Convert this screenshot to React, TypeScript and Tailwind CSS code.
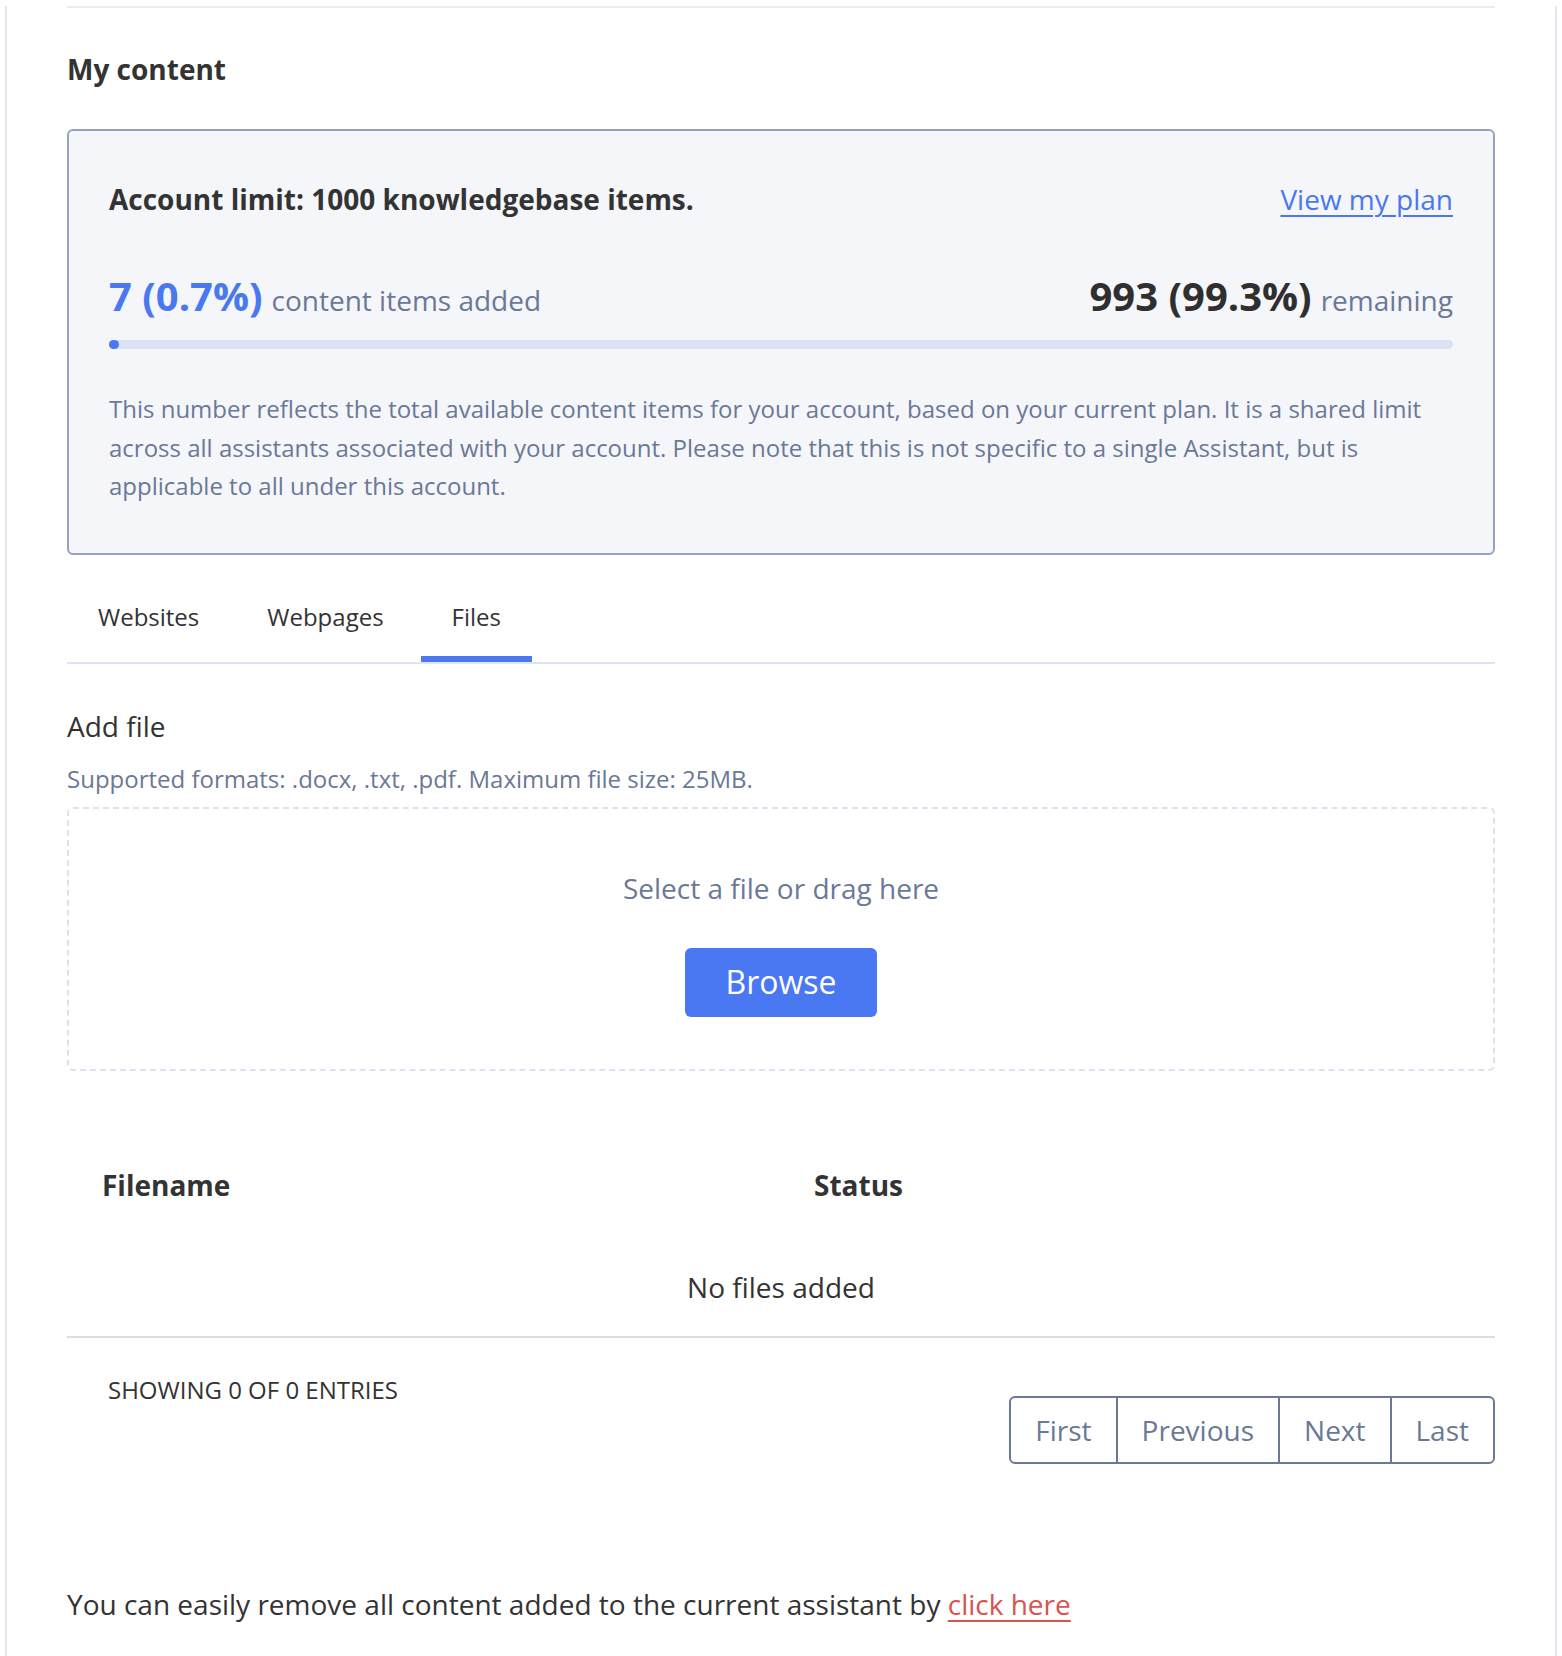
import React from 'react';

const font = { fontFamily: '"Open Sans", "Noto Sans", sans-serif' };

const tabs = ['Websites', 'Webpages', 'Files'];
const pages = ['First', 'Previous', 'Next', 'Last'];

export default function App() {
  const used = 7;
  const limit = 1000;
  const pct = (used / limit) * 100;

  return (
    <div className="min-h-screen bg-white text-[#333333]" style={font}>
      <div className="ml-[5px] w-[1552px] border-x-2 border-[#e3e7f1] px-[60px] pb-[50px]">
        <div className="mt-[6px] border-t-2 border-[#ececec]">
          <h1 className="mt-[40px] text-[28px] font-bold leading-[42px]">My content</h1>

          {/* account limit card */}
          <div className="mt-[39px] rounded-md border-2 border-[#96a2c3] bg-[#f4f6fa] px-[40px] pt-[47px] pb-[47px]">
            <div className="flex items-baseline justify-between leading-[42px]">
              <span className="text-[28px] font-bold">Account limit: 1000 knowledgebase items.</span>
              <a href="#" className="text-[28px] text-[#4a78f0] underline underline-offset-[5px] decoration-[2px]">
                View my plan
              </a>
            </div>
            <div className="mt-[46px] flex items-baseline justify-between leading-[60px]">
              <div>
                <span className="text-[40px] font-bold text-[#4a78f0]">7 (0.7%)</span>
                <span className="ml-[9px] text-[28px] text-[#6b7896]">content items added</span>
              </div>
              <div>
                <span className="text-[40px] font-bold text-[#2f2f2f]">993 (99.3%)</span>
                <span className="ml-[9px] text-[28px] text-[#6b7896]">remaining</span>
              </div>
            </div>
            <div className="mt-[5px] h-[9px] rounded-full bg-[#dbe2f4]">
              <div className="h-[9px] min-w-[10px] rounded-full bg-[#4a78f0]" style={{ width: `${pct}%` }} />
            </div>
            <p className="mt-[41px] text-[24px] leading-[38.5px] text-[#6b7896]">
              This number reflects the total available content items for your account, based on your current plan. It is a shared limit
              across all assistants associated with your account. Please note that this is not specific to a single Assistant, but is
              applicable to all under this account.
            </p>
          </div>

          {/* tabs */}
          <div className="mt-[24px] flex gap-[6px] border-b-2 border-[#dde4f2]">
            {tabs.map((t) => (
              <button
                key={t}
                className={`px-[31px] pt-[20px] pb-[21px] border-b-[6px] text-[24px] leading-[36px] text-[#333333] ${
                  t === 'Files' ? 'border-[#4a78f0]' : 'border-transparent'
                }`}
              >
                {t}
              </button>
            ))}
          </div>

          {/* add file */}
          <h2 className="mt-[41px] text-[28px] leading-[42px]">Add file</h2>
          <p className="mt-[14px] text-[24px] leading-[36px] text-[#6b7896]">
            Supported formats: .docx, .txt, .pdf. Maximum file size: 25MB.
          </p>
          <div className="mt-[10px] flex flex-col items-center rounded-md border-2 border-dashed border-[#dce2f0] pt-[58px] pb-[52px]">
            <div className="text-[28px] leading-[42px] text-[#6b7896]">Select a file or drag here</div>
            <button className="mt-[39px] h-[69px] rounded-md bg-[#4a78f2] px-[40px] text-[32px] text-white">Browse</button>
          </div>

          {/* files table */}
          <div className="mt-[93px] grid grid-cols-2 text-[28px] font-bold leading-[42px]">
            <div className="px-[35px]">Filename</div>
            <div className="px-[33px]">Status</div>
          </div>
          <div className="mt-[60px] text-center text-[28px] leading-[42px]">No files added</div>
          <div className="mt-[28px] border-t-2 border-[#dedede]" />

          <div className="flex items-start justify-between pt-[34px]">
            <div className="pl-[41px] text-[24px] leading-[36px] uppercase">Showing 0 of 0 entries</div>
            <div className="mt-[24px] flex rounded-md border-2 border-[#6b7896]">
              {pages.map((p, i) => (
                <button
                  key={p}
                  className={`px-[24px] py-[11px] text-[28px] leading-[42px] text-[#6b7896] ${i > 0 ? 'border-l-2 border-[#6b7896]' : ''}`}
                >
                  {p}
                </button>
              ))}
            </div>
          </div>

          <p className="mt-[119px] text-[28px] leading-[42px]">
            You can easily remove all content added to the current assistant by{' '}
            <a href="#" className="text-[#d9534f] underline underline-offset-[5px] decoration-[2px]">
              click here
            </a>
          </p>
        </div>
      </div>
    </div>
  );
}
